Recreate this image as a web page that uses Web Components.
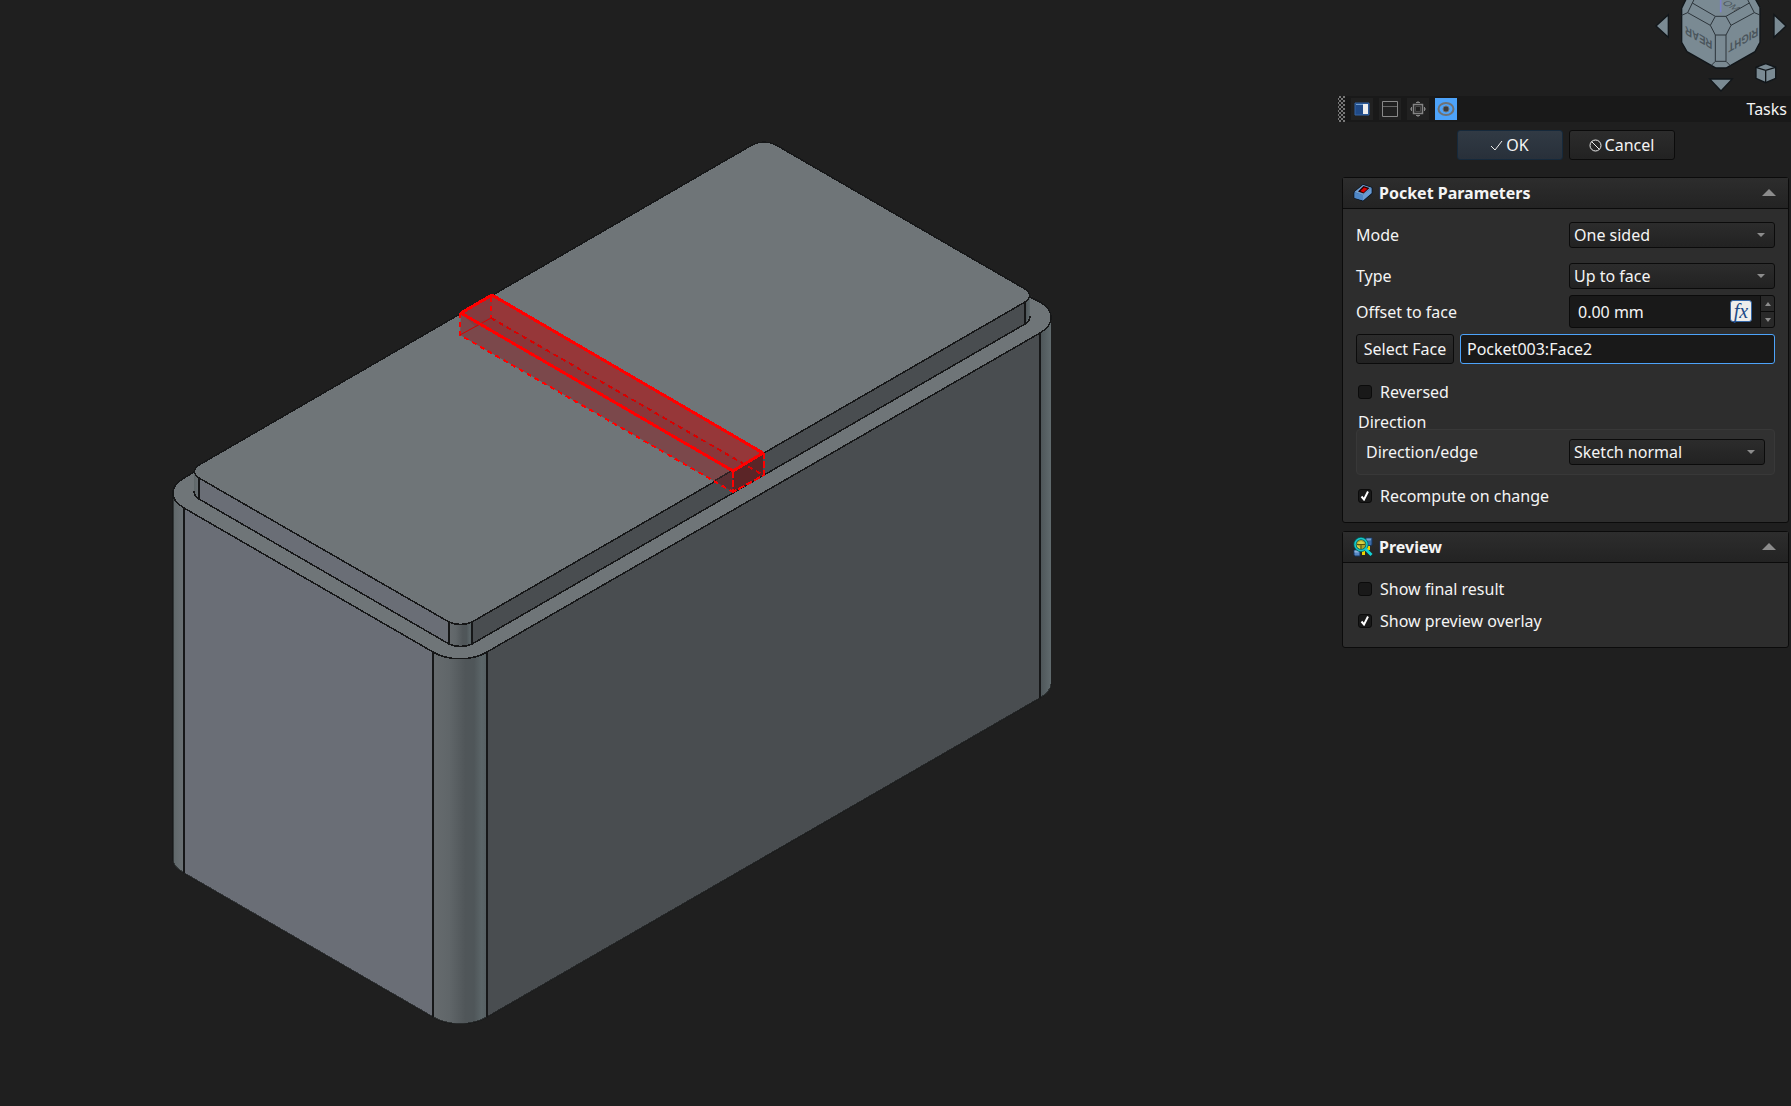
<!DOCTYPE html>
<html lang="en">
<head>
<meta charset="utf-8">
<title>Pocket Parameters</title>
<style>
  html, body {
    height: 100%;
    margin: 0;
  }

  body {
    background: #1f1f1f;
    color: #f4f4f4;
    font: 16px/22px "Noto Sans", sans-serif;
    overflow: hidden;
  }
</style>
</head>
<body>
<cad-window>
  <model-view slot="view"></model-view>
  <nav-cube slot="cube"></nav-cube>
  <task-panel slot="panel" title="Tasks">
    <task-group title="Pocket Parameters">
      <svg slot="icon" viewBox="0 0 20 20" width="20" height="20" aria-hidden="true">
        <path d="M1 9 10 1.500 19 4.500v6L10 18 1 15z" fill="#3465a4" stroke="#0b1521"/>
        <path d="M1.500 9.500 10 12v5.500L1.500 15z" fill="#4f87c7"/>
        <path d="M10 12 18.500 5v5L10 17.500z" fill="#6b9bd2"/>
        <path d="M1.500 9 10 2l8.500 2.700L10 12z" fill="#729fcf"/>
        <path d="M5 8.500 10.500 3l6 2-6 5.500z" fill="#280000"/>
        <path d="m7.500 8 3.500-3.500 3.500 1.200-4 3.700z" fill="#e00000"/>
      </svg>
      <task-select label="Mode" options="One sided,Two sided,Symmetric"></task-select>
      <task-select class="mode" label="Type" options="Up to face,Dimension,Through all,To first"></task-select>
      <task-quantity class="tight" label="Offset to face" value="0.00 mm"></task-quantity>
      <task-reference class="tight" label="Select Face" value="Pocket003:Face2"></task-reference>
      <task-check class="wide" label="Reversed"></task-check>
      <task-fieldset class="near" title="Direction">
        <task-select label="Direction/edge" options="Sketch normal,Custom direction"></task-select>
      </task-fieldset>
      <task-check class="check" label="Recompute on change" checked></task-check>
    </task-group>
    <task-group title="Preview">
      <svg slot="icon" viewBox="0 0 20 20" width="20" height="20" aria-hidden="true">
        <path d="M13 1h6v7l-3 1-3-1z" fill="#3c6ca8" stroke="#173760"/>
        <path d="M13.500 1.500h5l-1 2h-5z" fill="#729fcf"/>
        <path d="M1 13h6v6H2l-1-1z" fill="#5788c4" stroke="#173760"/>
        <path d="M1.500 13.500h5l-1 2h-4z" fill="#8fb3de"/>
        <path d="M9 13h3v5H9zM14 9h3v4h-3z" fill="#edd400"/>
        <circle cx="8" cy="7.500" r="6" fill="#a9a52b"/>
        <path d="m4 6 4-2 4 2-4 2zM4 8l3 2v2L4 10z" fill="#d9d346"/>
        <path d="M4 7.500h8M8 8v4" stroke="#55510b" fill="none"/>
        <circle cx="8" cy="7.500" r="6" fill="none" stroke="#066" stroke-width="3"/>
        <circle cx="8" cy="7.500" r="6" fill="none" stroke="#19c8c8" stroke-width="1.500"/>
        <path d="m12.500 12 6 6" stroke="#12d4d8" stroke-width="3"/>
      </svg>
      <task-check label="Show final result"></task-check>
      <task-check class="check" label="Show preview overlay" checked></task-check>
    </task-group>
  </task-panel>
</cad-window>

<script>
class CadWindow extends HTMLElement {
  constructor() {
    super();
    this.attachShadow({ mode: "open" });
    this.shadowRoot.innerHTML = `
      <style>
        :host {
          display: grid;
          grid-template-columns: minmax(0, 1fr) 453px;
          grid-template-rows: 96px minmax(0, 1fr);
          height: 100vh;
        }
        .view { grid-area: 1 / 1 / -1 / -1; min-height: 0; }
        .cube { grid-area: 1 / 2; justify-self: end; z-index: 1; }
        .panel { grid-area: 2 / 2; z-index: 1; }
      </style>
      <main class="view"><slot name="view"></slot></main>
      <div class="cube"><slot name="cube"></slot></div>
      <aside class="panel"><slot name="panel"></slot></aside>
    `;
  }
}

class ModelView extends HTMLElement {
  constructor() {
    super();
    this.attachShadow({ mode: "open" });
    this.shadowRoot.innerHTML = `
      <style>
        :host { display: block; height: 100%; }
        svg { display: block; width: 100%; height: 100%; }
        .edge { fill: none; stroke: #161718; stroke-width: 1.500; shape-rendering: crispEdges; }
        .seam { fill: none; stroke: #161718; stroke-width: 2; shape-rendering: crispEdges; }
        .top { fill: #6f7578; }
        .solid { fill: none; stroke: #f00; stroke-width: 3; stroke-linejoin: round; shape-rendering: crispEdges; }
        .hidden { fill: none; stroke: #f00; stroke-width: 2; stroke-dasharray: 5 4; shape-rendering: crispEdges; }
        .inner { stroke: #d80000; }
        .end { fill: none; stroke: #f00; stroke-width: 2; stroke-dasharray: 7 2; shape-rendering: crispEdges; }
      </style>
      <svg viewBox="0 0 1791 1106" preserveAspectRatio="xMinYMin meet" role="img" aria-label="Model">
        <defs>
          <linearGradient id="front">
            <stop offset="0" stop-color="#666b6e"/>
            <stop offset=".3" stop-color="#606669"/>
            <stop offset=".6" stop-color="#505659"/>
            <stop offset=".76" stop-color="#4f5659"/>
            <stop offset=".9" stop-color="#5b6568"/>
            <stop offset="1" stop-color="#566063"/>
          </linearGradient>
          <linearGradient id="left">
            <stop offset="0" stop-color="#5f6769"/>
            <stop offset="1" stop-color="#6c7276"/>
          </linearGradient>
          <linearGradient id="right">
            <stop offset="0" stop-color="#4d5558"/>
            <stop offset="1" stop-color="#606a6d"/>
          </linearGradient>
        </defs>

        <!-- body -->
        <path fill="url(#left)" d="M173 493V860C173 865 177 869 184 873V508z"/>
        <path fill="#6a6e76" d="M184 508 433 652V1017L184 873z"/>
        <path fill="url(#front)" d="M433 652H487V1017C472 1026 448 1026 433 1017z"/>
        <path fill="#494d50" d="M487 652 1040 333V698L487 1017z"/>
        <path fill="url(#right)" d="M1040 333 1051 317V684C1051 690 1047 694 1040 698z"/>
        <path class="top" d="M184 478C169 487 169 499 184 508L433 652C448 661 472 661 487 652L1040 333C1055 324 1055 311 1040 302L1025 293 764 143z"/>
        <path class="edge" d="M194 472 184 478C169 487 169 499 184 508L433 652C448 661 472 661 487 652L1040 333C1055 324 1055 311 1040 302L1030 297"/>
        <path class="edge" d="M173 493V860C173 865 177 869 184 873L433 1017C448 1026 472 1026 487 1017L1040 698C1047 694 1051 690 1051 684" opacity=".6"/>
        <path class="seam" d="M184 508V873M433 652V1017M487 652V1017M1040 333V698"/>

        <!-- raised block -->
        <path fill="url(#left)" d="M194 471H199V499L194 493z"/>
        <path fill="#6a6e76" d="M199 478 449 622V644L199 499z"/>
        <path fill="url(#front)" d="M449 622H472V644C465 647 456 647 449 644z"/>
        <path fill="#494d50" d="M472 622 1025 302V324L472 644z"/>
        <path fill="url(#right)" d="M1025 302 1030 296V316L1025 324z"/>
        <path class="edge" d="M194 491C194 495 195 497 199 499L449 644C456 647 465 647 472 644L1025 324C1029 322 1030 320 1030 316"/>
        <path class="top" d="M199 465C193 469 193 474 199 478L449 622C456 625 465 625 472 622L1025 302C1031 298 1031 293 1025 289L776 145C768 141 760 141 752 145z"/>
        <path class="edge" d="M199 465C193 469 193 474 199 478L449 622C456 625 465 625 472 622L1025 302C1031 298 1031 293 1025 289L776 145C768 141 760 141 752 145z"/>
        <path class="seam" d="M199 478V499M449 622V644M472 622V644M1025 302V324"/>

        <!-- pocket preview -->
        <path fill="#7b484b" d="M461 313 733 471V492L460 335z"/>
        <path fill="#5a3034" d="M714 481 733 470V492z"/>
        <path fill="#963739" d="M461 313 492 295 763 453 733 471z"/>
        <path fill="#843b3f" d="M461 313 492 295V318L476 327z"/>
        <path fill="#8b3639" d="M492 318 763 474V453L733 471 476 322z"/>
        <path fill="#5b2527" d="M733 471 763 453V475L733 492z"/>
        <path class="edge" d="M714 481 733 470" opacity=".7"/>
        <path class="hidden" d="M460 313V335L733 492M491 297V318"/>
        <path class="hidden inner" d="M491 318 763 475"/>
        <path class="inner" d="M460 335 491 318"/>
        <path class="end" d="M733 471V492L764 475V453"/>
        <path class="solid" d="M461 313 492 295 763 453 733 471z"/>
      </svg>
    `;
  }
}

class NavCube extends HTMLElement {
  constructor() {
    super();
    this.attachShadow({ mode: "open" });
    // three drawing units to one pixel
    this.shadowRoot.innerHTML = `
      <style>
        :host { display: block; }
        svg { display: block; }
        .face { fill: #7a8a93; stroke: #11161a; stroke-width: 4; }
        .line { fill: none; stroke: #2c343a; stroke-width: 3; }
        text { font: bold 36px "Liberation Sans", sans-serif; fill: #4a555c; }
        .far { font-size: 32px; font-weight: normal; }
      </style>
      <svg viewBox="0 0 453 288" width="151" height="96">
        <path class="face" d="M142-10 125 25V127L141 155 228 204H258L345 155 360 127V22L342-10z"/>
        <path class="line" d="M226 49H258L273 76 258 105H226L211 76zM226 105V184H258V105M226 184 214 196M258 184 270 196M226 49 157 9 143 38 211 76M157 9 163-3M143 38 125 46M258 49 328 9 343 38 273 76M328 9 322-3M343 38 360 45"/>
        <text transform="matrix(-.8 -.46 0 -1 217 124)">REAR</text>
        <text transform="matrix(-.8 .46 0 -1 355 82)">RIGHT</text>
        <text class="far" transform="matrix(.8 .46 -.8 .46 286 34)" text-anchor="end">OM</text>
        <path d="M242 0V37" stroke="#7c82c4" stroke-width="5"/>
        <path class="face" d="M85 44V112L48 78zM402 44V112L438 78zM209 237H277L243 273z"/>
        <path class="face" d="M377 191 407 202V235L377 248 348 235V202z"/>
        <path d="M348 202 377 211 407 202M377 211V248" fill="none" stroke="#11161a" stroke-width="4"/>
      </svg>
    `;
  }
}

class TaskPanel extends HTMLElement {
  constructor() {
    super();
    this.attachShadow({ mode: "open" });
    this.shadowRoot.innerHTML = `
      <style>
        :host { display: block; }
        .bar {
          display: flex;
          align-items: center;
          gap: 6px;
          height: 26px;
          padding-right: 4px;
          background: #191919;
        }
        .grip {
          width: 7px;
          height: 26px;
          background:
            radial-gradient(circle at 1px 1px, #777 1px, transparent 1px) 1px 0 / 4px 4px,
            radial-gradient(circle at 1px 1px, #777 1px, transparent 1px) 3px 2px / 4px 4px;
        }
        .bar button {
          display: grid;
          place-items: center;
          width: 22px;
          height: 22px;
          padding: 0;
          border: 0;
          background: #212121;
        }
        .bar button.on { background: #4da3fa; }
        .bar h1 {
          flex: 1;
          margin: 0;
          font: inherit;
          text-align: right;
        }
        .actions {
          display: flex;
          justify-content: center;
          gap: 6px;
          padding: 8px 1px 17px 4px;
        }
        .actions button {
          display: flex;
          align-items: center;
          justify-content: center;
          gap: 3px;
          width: 106px;
          height: 30px;
          padding: 0 1px 0 0;
          border: 1px solid #0b0b0b;
          border-radius: 3px;
          background: linear-gradient(#2c2c2c, #222);
          color: inherit;
          font: inherit;
        }
        .actions .ok {
          border-color: #16293b;
          background: linear-gradient(#313a44, #28303a);
        }
        .groups {
          display: flex;
          flex-direction: column;
          gap: 8px;
          padding: 0 2px 0 4px;
        }
      </style>
      <header class="bar">
        <span class="grip"></span>
        <button aria-label="Dock">
          <svg width="16" height="16" viewBox="0 0 16 16">
            <path d="M1 2h14v12H1z" fill="#204a87" stroke="#3465a4"/>
            <path d="M9 3h5v10H9z" fill="#eee"/>
            <path d="M2 3h7v1H2z" fill="#729fcf"/>
          </svg>
        </button>
        <button aria-label="Float">
          <svg width="16" height="16" viewBox="0 0 16 16" fill="none" stroke="#8a8a8a">
            <path d="M.5.500h15v15H.500z"/>
            <path d="M1 5.500h14" stroke="#666"/>
          </svg>
        </button>
        <button aria-label="Transparent">
          <svg width="16" height="16" viewBox="0 0 16 16" fill="none" stroke="#858585">
            <path d="M3.500 3.500h9v9h-9z" stroke-width="1.500"/>
            <path d="M5.500 5.500h5v5h-5z" stroke="#4a4a4a"/>
            <path d="M6 1.500h4M6 14.500h4M1.500 6v4M14.500 6v4M8 0v2M8 14v2M0 8h2M14 8h2"/>
          </svg>
        </button>
        <button class="on" aria-label="Overlay">
          <svg width="18" height="16" viewBox="0 0 18 16">
            <ellipse cx="9" cy="8" rx="7.500" ry="6" fill="none" stroke="#6f7274" stroke-width="2"/>
            <circle cx="9" cy="8" r="3" fill="#3c3c3c" stroke="#6f7274"/>
          </svg>
        </button>
        <h1></h1>
      </header>
      <div class="actions">
        <button class="ok">
          <svg width="13" height="12" viewBox="0 0 13 12" fill="none" stroke="#eee" aria-hidden="true"><path d="m1 7 4 4 7-9"/></svg>
          OK
        </button>
        <button>
          <svg width="13" height="13" viewBox="0 0 13 13" fill="none" stroke="#eee" aria-hidden="true"><circle cx="6.500" cy="6.500" r="5.500"/><path d="m2.500 2.500 8 8"/></svg>
          Cancel
        </button>
      </div>
      <div class="groups"><slot></slot></div>
    `;
    this.shadowRoot.querySelector("h1").textContent = this.getAttribute("title");
  }
}

class TaskGroup extends HTMLElement {
  constructor() {
    super();
    this.attachShadow({ mode: "open" });
    this.shadowRoot.innerHTML = `
      <style>
        :host {
          display: block;
          border: 1px solid #0b0b0b;
          border-radius: 3px;
          background: #2d2d2d;
        }
        header {
          display: flex;
          align-items: center;
          gap: 6px;
          height: 30px;
          padding: 0 9px 0 10px;
          border-bottom: 1px solid #0b0b0b;
          background: linear-gradient(#2d2d2d, #232323);
        }
        h2 {
          flex: 1;
          margin: 0;
          font: bold 16px/22px "Noto Sans", sans-serif;
        }
        button {
          display: flex;
          padding: 3px;
          border: 0;
          background: none;
        }
        .body {
          display: flex;
          flex-direction: column;
          padding: 13px 13px 15px;
        }
        ::slotted(.mode) { margin-top: 15px; }
        ::slotted(.tight) { margin-top: 6px; }
        ::slotted(.wide) { margin-top: 17px; }
        ::slotted(.near) { margin-top: 12px; }
        ::slotted(.check) { margin-top: 10px; }
        :host([title="Preview"]) .body { padding-top: 15px; }
        .body[hidden] { display: none; }
      </style>
      <header>
        <slot name="icon"></slot>
        <h2></h2>
        <button aria-label="Collapse">
          <svg width="14" height="8" viewBox="0 0 14 8"><path d="M7 0 14 7H0z" fill="#8c8c8c"/></svg>
        </button>
      </header>
      <div class="body"><slot></slot></div>
    `;
    this.shadowRoot.querySelector("h2").textContent = this.getAttribute("title");
    this.shadowRoot.querySelector("button").addEventListener("click", () => {
      const body = this.shadowRoot.querySelector(".body");
      body.hidden = !body.hidden;
    });
  }
}

class TaskSelect extends HTMLElement {
  constructor() {
    super();
    this.attachShadow({ mode: "open" });
    const options = this.getAttribute("options").split(",");
    this.shadowRoot.innerHTML = `
      <style>
        :host { display: flex; align-items: center; }
        label { flex: 1; }
        .field {
          display: grid;
          align-items: center;
          width: var(--control-width, 206px);
        }
        select, svg { grid-area: 1 / 1; }
        select {
          appearance: none;
          width: 100%;
          height: 26px;
          padding: 0 24px 0 4px;
          border: 1px solid #0b0b0b;
          border-radius: 3px;
          outline: 0;
          background: linear-gradient(#2c2c2c, #222);
          color: inherit;
          font: inherit;
        }
        svg { justify-self: end; margin-right: 10px; pointer-events: none; }
      </style>
      <label for="value">${this.getAttribute("label")}</label>
      <div class="field">
        <select id="value">${options.map((o) => `<option>${o}</option>`).join("")}</select>
        <svg width="8" height="4" viewBox="0 0 8 4"><path d="M0 0H8L4 4z" fill="#8c8c8c"/></svg>
      </div>
    `;
  }
}

class TaskQuantity extends HTMLElement {
  constructor() {
    super();
    this.attachShadow({ mode: "open" });
    this.shadowRoot.innerHTML = `
      <style>
        :host { display: flex; align-items: center; }
        label { flex: 1; }
        .field {
          display: flex;
          align-items: center;
          box-sizing: border-box;
          width: 206px;
          height: 33px;
          border: 1px solid #0b0b0b;
          border-radius: 3px;
          background: #191919;
          overflow: hidden;
        }
        input {
          flex: 1;
          min-width: 0;
          padding: 0 8px;
          border: 0;
          outline: 0;
          background: none;
          color: inherit;
          font: inherit;
        }
        button { padding: 0; border: 0; }
        .fx {
          box-sizing: border-box;
          width: 22px;
          height: 22px;
          margin: 0 8px 2px 0;
          border: 1px solid #3465a4;
          border-radius: 3px;
          background: #eeeeec;
          color: #204a87;
          font: italic 20px/18px "Liberation Serif", serif;
        }
        .steps {
          display: grid;
          grid-template-rows: 1fr 1fr;
          gap: 1px;
          width: 13px;
          height: 100%;
          border-left: 1px solid #0b0b0b;
          background: #0b0b0b;
        }
        .steps button {
          display: grid;
          place-items: center;
          background: #292929;
        }
      </style>
      <label for="value">${this.getAttribute("label")}</label>
      <div class="field">
        <input id="value" value="${this.getAttribute("value")}">
        <button class="fx" aria-label="Expression">fx</button>
        <div class="steps">
          <button aria-label="Increase"><svg width="6" height="4" viewBox="0 0 6 4"><path d="M3 0 6 4H0z" fill="#8c8c8c"/></svg></button>
          <button aria-label="Decrease"><svg width="6" height="4" viewBox="0 0 6 4"><path d="M0 0H6L3 4z" fill="#8c8c8c"/></svg></button>
        </div>
      </div>
    `;
  }
}

class TaskReference extends HTMLElement {
  constructor() {
    super();
    this.attachShadow({ mode: "open" });
    this.shadowRoot.innerHTML = `
      <style>
        :host { display: flex; gap: 6px; }
        button, input {
          box-sizing: border-box;
          height: 30px;
          border: 1px solid #0b0b0b;
          border-radius: 3px;
          color: inherit;
          font: inherit;
        }
        button {
          width: 98px;
          padding: 0;
          background: linear-gradient(#2c2c2c, #222);
        }
        input {
          flex: 1;
          min-width: 0;
          padding: 0 6px;
          border-color: #4da3fa;
          outline: 0;
          background: #191919;
        }
      </style>
      <button id="pick">${this.getAttribute("label")}</button>
      <input aria-labelledby="pick" value="${this.getAttribute("value")}">
    `;
  }
}

class TaskCheck extends HTMLElement {
  constructor() {
    super();
    this.attachShadow({ mode: "open" });
    this.shadowRoot.innerHTML = `
      <style>
        :host { display: block; }
        label { display: flex; align-items: center; gap: 8px; padding-left: 2px; }
        .box { display: grid; place-items: center; }
        input, svg { grid-area: 1 / 1; }
        input {
          appearance: none;
          width: 14px;
          height: 14px;
          margin: 0;
          border: 1px solid #0b0b0b;
          border-radius: 3px;
          background: #191919;
        }
        svg { visibility: hidden; pointer-events: none; }
        input:checked + svg { visibility: visible; }
      </style>
      <label>
        <span class="box">
          <input type="checkbox" ${this.hasAttribute("checked") ? "checked" : ""}>
          <svg width="10" height="10" viewBox="0 0 10 10" fill="none" stroke="#fff" stroke-width="2"><path d="m1.500 5.500 2.500 3 4-8"/></svg>
        </span>
        ${this.getAttribute("label")}
      </label>
    `;
  }
}

class TaskFieldset extends HTMLElement {
  constructor() {
    super();
    this.attachShadow({ mode: "open" });
    this.shadowRoot.innerHTML = `
      <style>
        :host { display: block; }
        fieldset { margin: 0; padding: 0; border: 0; min-width: 0; }
        legend { padding: 0 2px; line-height: 14px; }
        .box {
          --control-width: 196px;
          padding: 9px;
          border: 1px solid #383838;
          border-radius: 4px;
          background: #313131;
        }
      </style>
      <fieldset>
        <legend>${this.getAttribute("title")}</legend>
        <div class="box"><slot></slot></div>
      </fieldset>
    `;
  }
}

customElements.define("cad-window", CadWindow);
customElements.define("model-view", ModelView);
customElements.define("nav-cube", NavCube);
customElements.define("task-panel", TaskPanel);
customElements.define("task-group", TaskGroup);
customElements.define("task-select", TaskSelect);
customElements.define("task-quantity", TaskQuantity);
customElements.define("task-reference", TaskReference);
customElements.define("task-check", TaskCheck);
customElements.define("task-fieldset", TaskFieldset);
</script>
</body>
</html>
